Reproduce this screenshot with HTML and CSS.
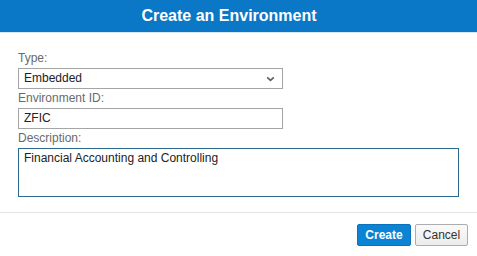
FILE: index.html
```html
<!DOCTYPE html>
<html>
<head>
<meta charset="utf-8">
<link rel="stylesheet" href="styles.css">
</head>
<body>
<div class="dialog">
  <div class="header">Create an Environment</div>
  <div class="content">
    <label class="label">Type:</label>
    <div class="select">
      <span>Embedded</span>
      <svg class="chev" width="9" height="6" viewBox="0 0 9 6"><path d="M1.2 1.3 L4.5 4.3 L7.8 1.3" fill="none" stroke="#606060" stroke-width="1.7"/></svg>
    </div>
    <label class="label">Environment ID:</label>
    <div class="input">ZFIC</div>
    <label class="label">Description:</label>
    <div class="textarea">Financial Accounting and Controlling</div>
  </div>
  <div class="footer">
    <button class="btn primary">Create</button>
    <button class="btn">Cancel</button>
  </div>
</div>
</body>
</html>
```
FILE: styles.css
```css
html, body {
  margin: 0;
  padding: 0;
  background: #fff;
}
body {
  font-family: "Liberation Sans", Arial, sans-serif;
  font-size: 12px;
  color: #222;
}
.dialog {
  width: 477px;
  height: 256px;
  display: flex;
  flex-direction: column;
}
.header {
  height: 32px;
  line-height: 32px;
  background: #0a78c6;
  color: #fff;
  font-weight: bold;
  font-size: 16px;
  text-align: center;
  padding-right: 19px;
  border-bottom: 1px solid #d6e6f3;
}
.content {
  padding: 16px 18px 15px 18px;
  display: flex;
  flex-direction: column;
  align-items: flex-start;
}
.label {
  display: block;
  height: 19px;
  line-height: 19px;
  color: #6a6a6a;
}
.select, .input {
  box-sizing: border-box;
  width: 265px;
  height: 21px;
  border: 1px solid #a5a5a5;
  padding: 0 7px 0 5px;
  line-height: 19px;
  color: #222;
  display: flex;
  align-items: center;
  justify-content: space-between;
}
.chev {
  display: block;
  margin-top: 1px;
}
.textarea {
  box-sizing: border-box;
  width: 441px;
  height: 49px;
  border: 1px solid #2d6a8f;
  box-shadow: inset 0 0 1px #c8f4f8;
  padding: 2px 5px;
  line-height: 15px;
  color: #222;
}
.footer {
  border-top: 1px solid #e3e3e3;
  padding: 11px 9px 10px;
  display: flex;
  justify-content: flex-end;
  gap: 4px;
}
.btn {
  box-sizing: border-box;
  height: 22px;
  width: 53px;
  padding: 0;
  font-family: "Liberation Sans", Arial, sans-serif;
  font-size: 12px;
  color: #333;
  background: linear-gradient(#fafafa, #ececec);
  border: 1px solid #adadad;
  border-radius: 2px;
}
.btn.primary {
  width: 54px;
  color: #fff;
  font-weight: bold;
  background: #0b84d4;
  border-color: #0a73bb;
}
```
